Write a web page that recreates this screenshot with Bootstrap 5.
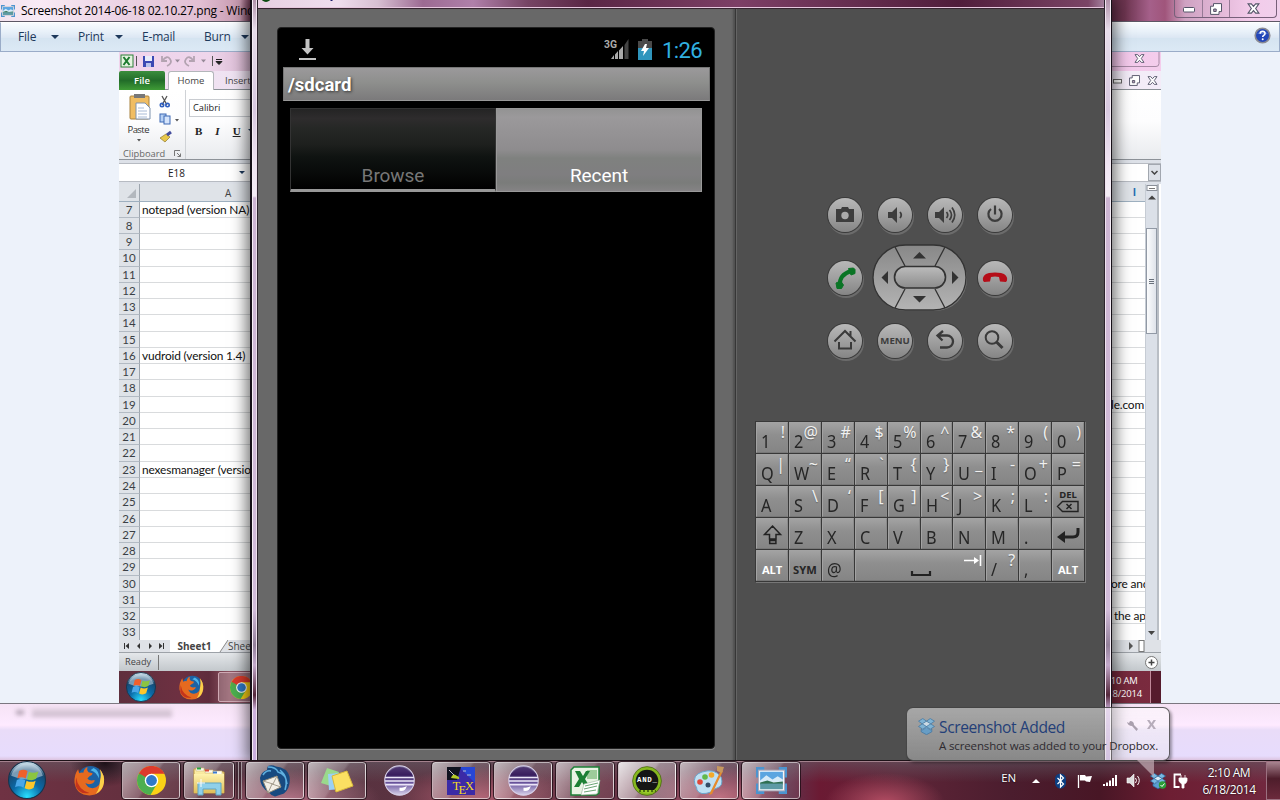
<!DOCTYPE html>
<html lang="en">
<head>
<meta charset="utf-8">
<title>Desktop</title>
<link href="https://cdn.jsdelivr.net/npm/bootstrap@5.3.0/dist/css/bootstrap.min.css" rel="stylesheet">
<style>
body{width:1280px;height:800px;overflow:hidden;font-family:"Open Sans","Noto Sans",sans-serif;line-height:1;font-size:12px;color:#000}
svg{display:block;flex:none}
.desk{width:1280px;height:800px;background:#e8dcfb}
/* photo viewer */
.viewer{left:0;top:0;width:1280px;height:761px}
.v-title{height:22px;background:linear-gradient(90deg,#f3e3ef 0,#f8eaf5 40px,#ecd3e4 120px,#e2bfd3 200px,#c79ab0 240px,#632d47 252px,#632d47 1100px,#6d3550 1125px,#a5608a 1150px,#a0557b 1165px,#cfa2c2 1185px,#f3cbea 1250px,#f0d0ec);border-bottom:1px solid #5d5765;padding-left:1px}
.v-title .cap{font-size:12px;margin-left:6px;letter-spacing:-.22px}
.v-ctl{width:103px;height:18px;border:1px solid #77607a;border-top:0;border-radius:0 0 4px 4px;margin-right:3px}
.v-ctl>*{height:17px;border-right:1px solid #967a96}
.v-ctl>:last-child{border:0}
.v-menu{height:30px;background:linear-gradient(#f8fbfe,#e9f1f9 30%,#dce7f3 52%,#d5e4f1 55%,#dce9f5);border:1px solid #9aacc8;border-top-color:#fff;color:#1e395b;padding-left:17px;letter-spacing:-.2px}
.tri{width:0;height:0;border:4px solid transparent;border-bottom:0;border-top-color:#1e395b}
.v-body{height:651px;background:#edf2fa}
.v-glass{height:58px;background:linear-gradient(#f6e3f5,#fdeaff 20px,#ffeaff 21px,#e9dcf8 26px,#e7dcfd 52px,#dcc3df 56px);border-top:1px solid #7b7780}
.blurbar{width:140px;height:9px;margin:4px 0 0 8px;background:linear-gradient(#e6d5e4,#c9b9ca);filter:blur(2px)}
.blurdot{width:8px;height:5px;margin:6px 0 0 16px;background:#b9a9ba;filter:blur(2px)}
/* spreadsheet */
.xl{width:1042px;height:651px;background:#fff;font-size:10px;color:#444}
.xl-qat{height:19px;background:linear-gradient(90deg,#f1d3ec,#eed6eb 90px,#d9b8d2 131px,#fff 140px,#f3c7ea 990px,#f4cdec)}
.xl-tabs{height:19px;background:linear-gradient(90deg,#f2e0f1,#efe3f2 130px,#f3ecf8);border-bottom:1px solid #8a9096}
.xl-file{width:46px;height:19px;background:linear-gradient(#3b8e3d,#226c29 50%,#3f9b36);color:#fff;border-radius:2px 2px 0 0;font-weight:600;font-size:9.5px}
.xl-home{width:46px;height:19px;background:#fff;border:1px solid #b3b6ba;border-bottom:0;border-radius:3px 3px 0 0;margin-left:3px;font-size:9.5px}
.xl-rib{height:70px;background:linear-gradient(#fff,#fdfdfe 45%,#e9ebee);border-bottom:1px solid #8d9298}
.xl-clip{width:67px;border-right:1px solid #cfd2d6}
.xl-fbar{height:24px;background:#dde1e8;padding-top:3px}
.xl-fbar>div{height:17px;background:#fff;border-top:1px solid #b7bbc2;border-bottom:1px solid #b7bbc2;box-sizing:content-box}
.xl-main{height:456px}
.grid-area{width:1026px}
.xl-hd{height:17.5px;background:#dfe3e8;border-bottom:1px solid #9eb0c0}
.xl-r{height:16.27px;font-family:Lato,"Open Sans",sans-serif;font-size:11.9px;color:#111}
.xl-r .no{width:21px;background:#dfe3e8;border-right:1px solid #9da5ae;border-bottom:1px solid #b3bbc4;color:#3a3f45;text-align:center;font-size:11.5px;line-height:16px}
.xl-r .ce{border-bottom:1px solid #d9dbdd;line-height:16px;padding-left:2px;letter-spacing:-.15px;white-space:pre}
.xl-sb{width:14px;background:#dbe0e8;border-left:1px solid #c6ccd4;border-right:2px solid #b9bec5}
.thumb{width:11px;height:106px;background:linear-gradient(90deg,#fbfcfd,#dfe3ea);border:1px solid #9199a5}
.xl-sheets{height:12px;background:#dfe2e7}
.xl-stat{height:19px;background:linear-gradient(#e4e7ea,#c3c8cc);border-top:1px solid #9da2a8}
.xl-task{height:32px;background:linear-gradient(90deg,#5f2f3d,#6d3041 60px,#5f2c3c 90px,#8c5462 110px,#784457 140px,#6d2638 900px,#7b2b3f)}
/* emulator window */
.emu{left:250px;top:0;width:862px;height:761px;box-shadow:0 0 15px 3px rgba(0,0,0,.6);border-left:2px solid #161018;border-right:1px solid #161018;background:linear-gradient(#b193ab 0,#e7dcea 30px,#d8c8e0 110px,#f0e4f2 165px,#f4edf6 196px,#cdb5d3 198px,#d2bcda 610px,#93809a 645px,#c3a9cb 665px,#55283c 695px,#cdb1dc 710px,#c9aede)}
.emu::after{content:"";position:absolute;inset:0;border:solid #f6edf6;border-width:0 1px;pointer-events:none}
.emu-in{margin:0 6px 0 5px;border-left:1px solid #2d232d;border-right:1px solid #2d232d;width:848px;outline:1px solid #efe2ee}
.emu-t{height:9px;background:linear-gradient(90deg,#e7cfe2,#efdeee 80px,#d7bfd2 120px,#9c6a92 165px,#b080aa 215px,#764464 270px,#5a2645 330px,#7d3f66 480px,#501d3b 700px,#7b4466 830px,#a4809d);border-bottom:1px solid #35242f;box-shadow:inset 0 -1px #e6c7de}
.lp{width:478px;background:#686868;padding:18px 0 0 19px;border-right:1px solid #373737;box-shadow:inset -3px 0 2px -1px #515151}
.rp{width:368px;background:#4f4f4f;box-shadow:inset 1px 0 #656565}
.scr{width:438px;height:722px;background:#000;border-radius:4px;box-shadow:0 1px #8a8a8a;font-family:Roboto,sans-serif;border:1px solid #222}
.pathbar{margin:0 4px 0 5px;height:34px;background:linear-gradient(#9b999b,#8e8f8d 45%,#7b7a7b);color:#fff;font-weight:700;font-size:18.5px;padding:2px 0 0 4px;text-shadow:1px 1px 3px #333;border:1px solid #777;border-bottom-color:#999}
.andtab{width:206px;height:84px;font-size:19px;letter-spacing:-.05px}
.t1{background:linear-gradient(#242424,#2e2c2d 12%,#252725 25%,#1d1f1d 45%,#0f1311 60%,#080a09 80%,#000);color:#777;border:1px solid #333;border-bottom:3px solid #989898;padding-bottom:4px}
.t2{background:linear-gradient(#939393,#9b999b 10%,#8e8c8e 50%,#7f817f 60%,#7f7e80 80%,#7a7c7a 90%,#858385);color:#fff;border:1px solid #999;padding-bottom:6px}
.pad{grid-template-columns:repeat(4,34px);grid-template-rows:repeat(3,34px);column-gap:15.8px;row-gap:29px;display:grid;margin-top:189px}
.kb2{width:34px;height:34px;border-radius:50%;background:linear-gradient(#b8b8b8,#a0a0a0 50%,#858585);box-shadow:0 0 0 1px #3a3a3a,1px 2px 0 1px #6b6b6b;color:#3d3d3d;font-weight:700;font-size:9.6px}
.dpad{grid-column:2/4;grid-row:2;place-self:center}
.keys{display:grid;grid-template-columns:repeat(10,1fr);grid-template-rows:repeat(5,31px);gap:1px;width:330px;padding:1px;background:#383838;margin-top:63px;box-shadow:1px 1px #777;font-family:"Noto Sans","Open Sans",sans-serif}
.ky{background:linear-gradient(#a2a2a2,#8f8f8f 40%,#858585);border:1px solid #a3a3a3;border-right-color:#8b8b8b;border-bottom-color:#777;font-size:17.5px;color:#262626;padding:9px 0 0 4px;line-height:18px}
.ky>b{display:inline-block;font-weight:400;transform:scaleX(.93);transform-origin:0 0}
.ky sup{right:2px;top:0;color:#f0f0f0;font-size:16px;line-height:18px;text-shadow:0 1px 1px #666}
.sp{grid-column:span 4}
.wd{font-size:11.2px;font-weight:700;padding:0;line-height:11px}
/* notification balloon */
.toast-tip{left:906px;top:707px;width:264px;height:54px;border:1px solid rgba(45,45,45,.75);border-radius:7px;background:linear-gradient(rgba(255,255,255,.5),rgba(230,230,230,.38));box-shadow:2px 2px 3px rgba(0,0,0,.35);padding:10px 9px 0 11px}
.toast-tip h6{font-size:15.6px;color:#243f78;margin:0;font-weight:400;line-height:18px;letter-spacing:-.43px}
.toast-tip p{font-size:11.5px;color:#2e2b30;margin:4px 0 0 21px;white-space:nowrap;letter-spacing:-.14px}
.tail{left:1136px;top:760px}
/* taskbar */
.tbar{left:0;top:760px;width:1280px;height:40px;background:radial-gradient(60px 30px at 885px 42px,#b34d63,transparent),radial-gradient(70px 30px at 720px 36px,#b86375,transparent),radial-gradient(90px 30px at 290px 38px,#a8667a,transparent),radial-gradient(90px 30px at 480px 36px,#ab5a6c,transparent),radial-gradient(35px 24px at 105px 2px,#1d1018,transparent),linear-gradient(rgba(100,95,105,.55),rgba(60,45,55,0) 55%),linear-gradient(90deg,#6f3243,#65303f 120px,#57303d 250px,#5a3341 400px,#6a3546 600px,#63314a 790px,#6b1a33 820px,#5f2538 900px,#4b1d2e 1010px,#481625 1100px,#6d1e33 1170px,#722940 1280px);border-top:1px solid #1d1218;box-shadow:inset 0 1px #a3818d}
.tb{width:58px;height:37px;margin:1px 2px 0;border:1px solid rgba(255,255,255,.55);border-radius:3px;outline:1px solid rgba(25,10,18,.75);background:linear-gradient(125deg,rgba(255,255,255,.6),rgba(255,255,255,.26) 48%,rgba(255,255,255,.12) 52%,rgba(255,255,255,.06))}
.tb.plain{border-color:transparent;outline:0;background:none}
.tb.hot{background:linear-gradient(125deg,rgba(255,255,255,.85),rgba(255,255,255,.5) 48%,rgba(255,255,255,.36) 52%,rgba(255,255,255,.26))}
.stk{width:3px;height:37px;margin-top:1px;border-right:1px solid rgba(255,255,255,.5);background:rgba(30,10,20,.45)}
.tray{color:#fff;letter-spacing:-.2px;text-shadow:0 0 2px #000}
.peek{width:14px;height:39px;border:1px solid #9b7080;border-right:0;background:linear-gradient(#a88490,#4e1d2b 45%,#6b2a3c)}
</style>
</head>
<body>
<svg width="0" height="0" class="position-absolute">
<defs>
<radialGradient id="og" cx=".5" cy=".95" r=".9"><stop offset="0" stop-color="#29e0ff"/><stop offset=".45" stop-color="#0a6aa8"/><stop offset=".8" stop-color="#174a73"/><stop offset="1" stop-color="#b9d2e0"/></radialGradient>
<linearGradient id="eg" x1="0" y1="0" x2="0" y2="1"><stop offset="0" stop-color="#8f86ad"/><stop offset=".3" stop-color="#39205e"/><stop offset=".6" stop-color="#6d58a0"/><stop offset="1" stop-color="#d9d3ea"/></linearGradient>
<linearGradient id="mg" x1="0" y1="0" x2="0" y2="1"><stop offset="0" stop-color="#888"/><stop offset="1" stop-color="#b4b4b4"/></linearGradient>
<linearGradient id="cg" x1="0" y1="0" x2="0" y2="1"><stop offset="0" stop-color="#bcbcbc"/><stop offset="1" stop-color="#8c8c8c"/></linearGradient>
<linearGradient id="fg" x1="0" y1="0" x2="0" y2="1"><stop offset="0" stop-color="#fff3ae"/><stop offset="1" stop-color="#dfbd58"/></linearGradient>
</defs>
<symbol id="orb" viewBox="0 0 36 36"><circle cx="18" cy="18" r="17.500" fill="url(#og)" stroke="#16344c"/><path d="M3 14a15.500 15.500 0 0 1 30 0q-15 7-30 0" fill="#dceaf2" opacity=".5"/>
<path d="M10.500 9.500q4-2.500 8 0l-1.700 7q-4-2-8 0z" fill="#f0602b"/><path d="M19.800 10.200q4 2.200 9-.3l-2.200 7q-4 2.400-8.600.3z" fill="#8bc540"/><path d="M8.400 18q4-2.200 8 .2l-1.700 7.200q-4-2.500-8-.5z" fill="#4aa7e8"/><path d="M17.600 18.600q4.200 2.300 8.600 0l-2 7q-4 2.500-8.500.2z" fill="#fcc72c"/></symbol>
<symbol id="ff" viewBox="0 0 30 30"><circle cx="16" cy="14" r="13" fill="#1c62a4"/><path d="M19 3q6 3 5 10-2-6-8-8z" fill="#4db4e8"/><path d="M25 4q5 6 4 13-2 12-14 12.500Q2 29 .5 17 0 9 4 4l1 4q2-1 4-.5Q10 3 13 2q-1 3 1 5l4 1q0 2-3 3l-2 2q1 2 4 2l3-.5q0 3-4 4-3 .5-5-1 2 5 7 5 8-1 7.500-9Q27 9 25 4z" fill="#e66a1f"/><path d="M25 4q5 6 4 13-1 8-8 11 4-5 4-11.500Q27 9 25 4z" fill="#fbd04a"/><path d="M2 12q2 12 13 15-10 2-13.500-7z" fill="#c4341c"/></symbol>
<symbol id="ch" viewBox="0 0 28 28"><circle cx="14" cy="14" r="14" fill="#fbd116"/><path d="M1.900 7A14 14 0 0 0 13 28l6.500-11L14 14z" fill="#4caf50"/><path d="M1.900 7A14 14 0 0 1 26.500 7.500H14L8 17z" fill="#dc3a2c"/><path d="M1.900 7L8.500 18.500 14 14z" fill="#4caf50"/><circle cx="14" cy="14" r="6.500" fill="#fff"/><circle cx="14" cy="14" r="5.200" fill="#2f79c8"/></symbol>
<symbol id="ec" viewBox="0 0 30 30"><circle cx="15" cy="15" r="14.300" fill="url(#eg)" stroke="#d8d0e8"/><path d="M3 10Q8 2 15 2t12 8z" fill="#3b1e60" opacity=".7"/><path d="M1 12h28M1 15.500h28M1.500 19h27" stroke="#ece6f8" stroke-width="1.500"/><path d="M15 22q5 0 7-2-1 6-7 5" fill="#fff"/></symbol>
<symbol id="db" viewBox="0 0 16 16"><path d="M4 5.500L8 3l4 2.500v7L8 15l-4-2.500z" fill="#d6eaf7"/><path d="M4.500.5L8 3 4 5.500.5 3zM11.500.5L15.500 3 12 5.500 8 3zM.5 8L4 5.500 8 8l-3.500 2.500zM15.500 8L12 5.500 8 8l3.500 2.500z" fill="#78b9e2" stroke="#2c6ca0" stroke-width=".7"/><path d="M3 10.500l1.500.7L8 8.700l3.500 2.500 1.500-.7v2.500L8 15.700 3 13z" fill="#5b9ed0" stroke="#2c6ca0" stroke-width=".7"/></symbol>
<symbol id="pic" viewBox="0 0 30 26"><path d="M0 0h8v4H3v6H0zM30 0h-8v4h5v6h3zM0 26h8v-4H3v-6H0zM30 26h-8v-4h5v-6h3z" fill="#4c94cf"/><rect x="2.500" y="3" width="25" height="20" fill="#fff" stroke="#aab"/><rect x="4" y="4.500" width="22" height="9" fill="#5ba5e0"/><path d="M4 13l6-5 6 4 5-3 5 3v3H4z" fill="#d7ebf8"/><path d="M4 15l7-2 6 2 9-1v3H4z" fill="#2f6f50"/><path d="M4 16h22v5.500H4z" fill="#5d9aa5"/></symbol>
<symbol id="cx" viewBox="0 0 12 10"><path d="M1 .7h3L6 3 8 .7h3L8 5l3 4.300H8L6 7 4 9.300H1L4 5z" fill="#fff" stroke="#545468" stroke-width="1"/></symbol>
<symbol id="rst" viewBox="0 0 12 12"><path d="M3.500.6h8v8H9v2.800H.6V3.200h2.900z" fill="#fff" stroke="#545468"/><path d="M3.700 6h2.500v2.500H3.700z" fill="#b99bb8" stroke="#545468"/></symbol>
</svg>

<div class="desk position-relative overflow-hidden">

<section class="viewer position-absolute">
 <div class="v-title d-flex align-items-center">
  <svg width="14" height="14"><use href="#pic"/></svg><span class="cap text-nowrap">Screenshot 2014-06-18 02.10.27.png - Windows Photo Viewer</span>
  <div class="v-ctl d-flex ms-auto align-self-start">
   <span class="d-flex align-items-center justify-content-center" style="width:28px"><svg width="12" height="6" style="margin-top:3px"><rect x=".5" y=".5" width="11" height="4.500" rx="1" fill="#fff" stroke="#545468"/></svg></span>
   <span class="d-flex align-items-center justify-content-center" style="width:27px"><svg width="12" height="12"><use href="#rst"/></svg></span>
   <span class="d-flex align-items-center justify-content-center flex-fill"><svg width="13" height="11"><use href="#cx"/></svg></span>
  </div>
 </div>
 <div class="v-menu d-flex align-items-center">
  <span style="width:33px">File</span><i class="tri"></i>
  <span style="width:37px;margin-left:19px">Print</span><i class="tri"></i>
  <span style="width:62px;margin-left:19px">E-mail</span><span style="width:37px">Burn</span><i class="tri"></i>
  <svg class="ms-auto me-2" width="17" height="17" viewBox="0 0 17 17" style="margin-top:-3px"><circle cx="8.500" cy="8.500" r="7.300" fill="#2447b8" stroke="#8a8a92" stroke-width="1.600"/><path d="M3 7q5.500-6 11 0" fill="#7f9fe8" opacity=".5"/><path d="M6.200 6.800q0-2.500 2.400-2.500t2.400 2.100q0 1.200-1.300 2-1 .6-1 1.700" fill="none" stroke="#fff" stroke-width="1.600"/><circle cx="8.700" cy="12.300" r="1" fill="#fff"/></svg>
 </div>
 <div class="v-body">
  <div class="xl ms-auto overflow-hidden" style="margin-right:119px">
   <div class="xl-qat d-flex">
    <svg width="131" height="19" viewBox="0 0 131 19"><rect x="2" y="3" width="12" height="12" fill="#e5f3e0" stroke="#2d8038"/><path d="M4.500 5l6 8m0-8l-6 8" stroke="#1c7a2e" stroke-width="2"/><path d="M17.500 4v10M93.500 4v10" stroke="#555"/><path d="M24 4h11v11H24z" fill="#3b49b3"/><path d="M26 4h7v5h-7z" fill="#e8ecfa"/><path d="M27 11h5v4h-5z" fill="#b8c2ea"/><path d="M43 4v5h5M44 8q4-5 7-1t-3 7M75 4v5h-5M74 8q-4-5-7-1t3 7" fill="none" stroke="#b3a3b1" stroke-width="1.800"/><path d="M56 7.500h5l-2.500 3zM82 7.500h5l-2.500 3z" fill="#978a98"/><path d="M97 7.500h6M97 9.500h6l-3 3z" stroke="#222" fill="#222"/></svg>
    <svg class="ms-auto" width="50" height="19" viewBox="0 0 50 19"><path d="M0 14.500h45q3 0 3-3V0" fill="none" stroke="#a78aa5"/><svg x="23" y="2" width="11" height="9"><use href="#cx"/></svg></svg>
   </div>
   <div class="xl-tabs d-flex">
    <div class="xl-file d-flex align-items-center justify-content-center">File</div><div class="xl-home d-flex align-items-center justify-content-center">Home</div><span style="font-size:9.5px;margin:5px 0 0 11px">Insert</span>
    <svg class="ms-auto" width="50" height="19" viewBox="0 0 50 19"><rect x="2.500" y="8.500" width="8" height="3.500" fill="#fff" stroke="#666"/><svg x="18" y="4" width="11" height="11"><use href="#rst"/></svg><svg x="36" y="5" width="11" height="9"><use href="#cx"/></svg></svg>
   </div>
   <div class="xl-rib d-flex">
    <div class="xl-clip">
     <svg width="66" height="56" viewBox="0 0 66 56"><rect x="11" y="6" width="19" height="23" rx="1" fill="#f0bd62" stroke="#a8823f"/><rect x="15" y="4" width="11" height="4" fill="#777"/><path d="M17 13h9l5 5v11H17z" fill="#fff" stroke="#7f93ae"/><path d="M19 18h6M19 21h9M19 24h9M19 27h9" stroke="#a8bbd6"/><path d="M43 6l5 9M48 6l-5 9" stroke="#555" stroke-width="1.300"/><circle cx="43" cy="15" r="1.700" fill="none" stroke="#2f5fc0" stroke-width="1.600"/><circle cx="48.500" cy="15" r="1.700" fill="none" stroke="#2f5fc0" stroke-width="1.600"/><rect x="41" y="24" width="6" height="8" fill="#b6d0f4" stroke="#3c68b4"/><rect x="45" y="26" width="6" height="8" fill="#d5e4fb" stroke="#3c68b4"/><path d="M56 29h4l-2 2.500zM18 49h4l-2 2.500z" fill="#555"/><path d="M41 48l6-4 4 3-5 5z" fill="#e8c84c" stroke="#8f7930" stroke-width=".7"/><path d="M48 45l4-3" stroke="#444d9c" stroke-width="3"/><text x="8.500" y="42.500" font-size="9.500" fill="#333" textLength="22">Paste</text></svg>
     <div class="d-flex align-items-center justify-content-between px-1" style="margin-top:3px;color:#666;font-size:9.300px">Clipboard<svg width="7" height="7" viewBox="0 0 7 7"><path d="M.5 6V.5H6M3 3l3.500 3.500V3.500M6.500 6.500H3.500" fill="none" stroke="#777"/></svg></div>
    </div>
    <div style="padding:9px 0 0 3px">
     <div class="d-flex align-items-center bg-white" style="width:80px;height:18px;border:1px solid #c9ccd1;padding-left:3px;font-size:9.200px;color:#222">Calibri</div>
     <div class="d-flex" style="font:bold 11px 'Liberation Serif',serif;color:#222;margin:8px 0 0 6px;gap:13px"><b>B</b><i>I</i><u>U</u><i class="tri" style="border-width:3px;border-bottom:0;margin:4px 0 0 -6px"></i></div>
    </div>
   </div>
   <div class="xl-fbar"><div class="d-flex align-items-center"><span class="text-center" style="width:115px;font-size:10px;color:#222">E18</span><i class="tri" style="border-width:3px;border-bottom:0;margin-left:5px"></i><span class="ms-auto d-flex align-items-center justify-content-center" style="width:13px;height:17px;background:#dde1e8;border:1px solid #a2a7af"><svg width="7" height="5"><path d="M.5 1l3 3 3-3" fill="none" stroke="#444" stroke-width="1.500"/></svg></span></div></div>
   <div class="xl-main d-flex">
    <div class="grid-area overflow-hidden">
     <div class="xl-hd d-flex align-items-center"><svg width="21" height="17"><path d="M17 5v9H8z" fill="#b3b8be"/><path d="M20.500 0v17" stroke="#9da5ae"/></svg><span style="margin:2px 0 0 85px;color:#444">A</span><span class="ms-auto fw-bold" style="margin-right:9px;color:#1d6ab0">I</span></div>
     <div id="rows"></div>
    </div>
    <div class="xl-sb d-flex flex-column align-items-center">
     <svg width="12" height="44" viewBox="0 0 12 44"><rect x="1" y="1.500" width="10" height="5" fill="#fff" stroke="#8a8f98"/><path d="M3 4.500h6" stroke="#777"/><path d="M2 15.500h8l-4-4z" fill="#444"/></svg>
     <div class="thumb d-flex align-items-center justify-content-center"><svg width="5" height="7"><path d="M0 1.500h5M0 3.500h5M0 5.500h5" stroke="#69717c"/></svg></div>
     <svg class="mt-auto mb-1" width="10" height="6"><path d="M1 1h7L4.500 5z" fill="#444"/></svg>
    </div>
   </div>
   <div class="xl-sheets d-flex align-items-center">
    <svg width="51" height="12" viewBox="0 0 51 12"><path d="M5.500 3v6M44.500 3v6" stroke="#333"/><path d="M10 3v6L6.500 6zM21 3v6l-3-3zM30 3v6l3-3zM40 3v6l3.500-3z" fill="#333"/></svg>
    <b class="bg-white text-center" style="width:49px;height:12px;font-size:10px;line-height:12px">Sheet1</b><svg width="9" height="12"><path d="M0 0h9L1 12H0z" fill="#fff"/><path d="M9 0L1 12" stroke="#888"/></svg><span>Sheet2</span>
    <svg class="ms-auto me-3" width="20" height="12"><path d="M4 2v8l4-4z" fill="#555"/><rect x="14" y=".5" width="5" height="11" fill="#fff" stroke="#777"/></svg>
   </div>
   <div class="xl-stat d-flex align-items-center" style="padding-left:6px;font-size:9.200px"><span style="width:33px">Ready</span><i style="width:1px;height:15px;background:#777"></i><svg class="ms-auto" width="13" height="13" style="margin-right:3px"><circle cx="6.500" cy="6.500" r="6" fill="#fff" stroke="#777"/><path d="M3.500 6.500h6M6.500 3.500v6" stroke="#444" stroke-width="1.500"/></svg></div>
   <div class="xl-task d-flex align-items-center"><svg width="30" height="30" style="margin-left:7px"><use href="#orb"/></svg><svg width="25" height="25" style="margin-left:23px"><use href="#ff"/></svg><span class="d-flex align-items-center" style="margin-left:14px;width:50px;height:30px;border:1px solid #cfa9b4;background:#ffffff33;padding-left:11px;border-radius:2px"><svg width="23" height="23"><use href="#ch"/></svg></span>
    <div class="ms-auto text-white text-center" style="font-size:9.500px;line-height:13.500px;margin-right:8px;letter-spacing:-.2px">2:10 AM<br>6/18/2014</div><i style="width:11px;height:32px;border-left:1px solid #c08898;background:#561b2c"></i></div>
  </div>
 </div>
 <div class="v-glass d-flex"><div class="blurdot"></div><div class="blurbar"></div></div>
</section>

<section class="emu position-absolute">
 <div class="emu-in">
  <div class="emu-t overflow-hidden"><svg width="90" height="7" viewBox="0 0 90 7"><circle cx="8" cy="-3" r="5" fill="#0c4a10"/><path d="M73.500 0v1" stroke="#1a1a6a" stroke-width="2"/></svg></div>
  <div class="d-flex" style="height:752px">
   <div class="lp">
    <div class="scr">
     <div class="d-flex align-items-center" style="height:39px;padding:4px 12px 0 21px">
      <svg width="17" height="22" viewBox="0 0 17 22"><path d="M6.500 0h4v9h4l-6 6.500-6-6.500h4z" fill="#c4c4c4"/><path d="M0 19h17v2H0z" fill="#c4c4c4"/></svg>
      <svg class="ms-auto" width="26" height="23" viewBox="0 0 26 23"><path d="M24.500 1v20h-4V7z" fill="#444"/><path d="M19 8v13h-4v-8.500zM14 13v8h-3v-4.500zM10 17v4H7z" fill="#aaa"/><text x="0" y="9.500" font-size="10.500" font-weight="700" font-family="Roboto" fill="#aaa" textLength="13" lengthAdjust="spacingAndGlyphs">3G</text></svg>
      <svg style="margin-left:8px" width="14" height="21" viewBox="0 0 14 21"><path d="M4 0h6v2h4v7H0V2h4z" fill="#4a4a4a"/><path d="M0 9h14v12H0z" fill="#2f95bd"/><path d="M7 5l-4 7h3l-1 5 6-8H8l1-4z" fill="#fff"/></svg>
      <span style="color:#31b0e0;font-size:22px;margin:3px 0 0 10px;letter-spacing:-.6px">1:26</span>
     </div>
     <div class="pathbar d-flex align-items-center">/sdcard</div>
     <div class="d-flex" style="margin:7px 0 0 12px">
      <div class="andtab t1 d-flex align-items-end justify-content-center">Browse</div>
      <div class="andtab t2 d-flex align-items-end justify-content-center">Recent</div>
     </div>
    </div>
   </div>
   <div class="rp d-flex flex-column align-items-center">
    <div class="pad">
     <span class="kb2"><svg width="34" height="34" viewBox="0 0 34 34"><path d="M8 11h5l1-2h6l1 2h5v13H8z" fill="#3d3d3d"/><circle cx="17" cy="17.500" r="3.700" fill="#aaa"/></svg></span>
     <span class="kb2"><svg width="34" height="34" viewBox="0 0 34 34"><path d="M10 14h4l5-5v16l-5-5h-4z" fill="#3d3d3d"/><path d="M22 14q2.500 3 0 6" stroke="#3d3d3d" stroke-width="1.800" fill="none"/></svg></span>
     <span class="kb2"><svg width="34" height="34" viewBox="0 0 34 34"><path d="M7 14h4l5-5v16l-5-5H7z" fill="#3d3d3d"/><path d="M18.500 14q2.500 3 0 6M21.500 12q4 5 0 10M24 9.500q5.500 7.500 0 15" stroke="#3d3d3d" stroke-width="1.700" fill="none"/></svg></span>
     <span class="kb2"><svg width="34" height="34" viewBox="0 0 34 34"><path d="M13 11a6.600 6.600 0 1 0 8 0M17 7.500v9" stroke="#3d3d3d" stroke-width="2.200" fill="none"/></svg></span>
     <span class="kb2"><svg width="34" height="34" viewBox="0 0 34 34"><path d="M12 24Q11 14 23 10" stroke="#0a7425" stroke-width="4" fill="none"/><path d="M8 22l4.500-2 3 4-2 3.500H9zM20.500 7.500l5-.5 1.500 1.500v4l-4 1.500z" fill="#0a7425" stroke="#0a7425" stroke-linejoin="round"/></svg></span>
     <svg class="dpad" width="96" height="68" viewBox="0 0 96 68"><rect x="2" y="3" width="93" height="64" rx="32" fill="#777"/><rect x="1" y="1" width="93" height="65" rx="32.500" fill="url(#mg)" stroke="#333" stroke-width="1.300"/><path d="M23 3l10 19M73 3L63 22M23 64l10-19M73 64L63 45" stroke="#333" stroke-width="1.300"/><rect x="22.500" y="22.500" width="51" height="21.500" rx="10.700" fill="url(#cg)" stroke="#333" stroke-width="1.600"/><path d="M41 14.500h13L47.500 8zM41 52h13l-6.500 6.500zM16 27v13l-6.500-6.500zM80 27v13l6.500-6.500z" fill="#333"/></svg>
     <span class="kb2" style="grid-column:4"><svg width="34" height="34" viewBox="0 0 34 34"><path d="M5 19.500q-1-6 6-7.500 6-1 12 0 7 1.500 6 7.500l-1 1.500-6-.5-1-4.500q-4-1-8 0l-1 4.500-6 .5z" fill="#b50d18"/></svg></span>
     <span class="kb2"><svg width="34" height="34" viewBox="0 0 34 34"><path d="M6.500 17.500L17 7l10.500 10.500M22.500 12.500V7M11 18v6.500h12V18" stroke="#3a3a3a" stroke-width="2" fill="none"/></svg></span>
     <span class="kb2 d-flex align-items-center justify-content-center">MENU</span>
     <span class="kb2"><svg width="34" height="34" viewBox="0 0 34 34"><path d="M15 7L9.500 11.500l5 5M9.500 11.500H19a6 6 0 0 1 0 12h-7" stroke="#3a3a3a" stroke-width="2.300" fill="none"/></svg></span>
     <span class="kb2"><svg width="34" height="34" viewBox="0 0 34 34"><circle cx="14" cy="13.500" r="6.300" stroke="#3a3a3a" stroke-width="2" fill="none"/><path d="M18.500 18l6 6" stroke="#3a3a3a" stroke-width="3"/></svg></span>
    </div>
    <div class="keys" id="keys"></div>
   </div>
  </div>
 </div>
</section>

<section class="tbar position-absolute d-flex align-items-start">
 <svg width="38" height="38" style="margin:0 0 0 8px"><use href="#orb"/></svg>
 <span class="tb plain d-flex align-items-center justify-content-center" style="margin-left:14px"><svg width="31" height="31"><use href="#ff"/></svg></span>
 <span class="tb d-flex align-items-center justify-content-center"><svg width="29" height="29"><use href="#ch"/></svg></span>
 <span class="tb d-flex align-items-center justify-content-center" style="width:50px"><svg width="32" height="30" viewBox="0 0 32 30"><path d="M1 3h10l2 3h18v21H1z" fill="url(#fg)" stroke="#c39d42"/><path d="M3 2h8v3H3zM12 4h8v3h-8zM20 5h9v4h-9z" fill="#fffdf0" stroke="#cdbb7c" stroke-width=".6"/><path d="M4 1.500h4v2H4z" fill="#27a243"/><path d="M12 3.500h4v2h-4z" fill="#d94a3a"/><path d="M20 5.500h4v2h-4z" fill="#3a7bd0"/><path d="M1 8h30v19H1z" fill="url(#fg)"/><path d="M5 29V17h23v12h-5v-6H10v6z" fill="#8fd0ea" stroke="#5ea5c4"/><path d="M8 13v8M4 17h8" stroke="#fff"/></svg></span>
 <i class="stk"></i><i class="stk" style="margin-right:2px"></i>
 <span class="tb d-flex align-items-center justify-content-center"><svg width="32" height="32" viewBox="0 0 32 32"><path d="M9 1q4-1.500 8 .5 11 1 13.500 10 1.500 11-5.500 17l-9 3q-4-1-6-4Q1 22 1 13q1-6 7-8 0-2 1-4z" fill="#174a80"/><path d="M9 2q8 0 10 5 8 2 9 12M21 5q9 7 5 20M4 10q3-5 8-4" stroke="#5fb0e0" stroke-width="1.500" fill="none"/><path d="M4 16l14-5 4 11-13 6z" fill="#f3efe6" stroke="#8c8676"/><path d="M4 16l10 3 4-8M9 28l4-9 9 3" fill="none" stroke="#a39c8c"/></svg></span>
 <span class="tb d-flex align-items-center justify-content-center"><svg width="34" height="28" viewBox="0 0 34 28"><path d="M7 1l12 4-5 15L1 16z" fill="#9ad98c"/><path d="M8 7l12-1 2 16-13 1z" fill="#9bd0f5"/><path d="M12 9l15-5 6 15-17 6z" fill="#fbe062" stroke="#d9b93c"/></svg></span>
 <span class="tb plain d-flex align-items-center justify-content-center"><svg width="31" height="31"><use href="#ec"/></svg></span>
 <span class="tb d-flex align-items-center justify-content-center"><svg width="28" height="28" viewBox="0 0 28 28"><rect width="28" height="28" fill="#3b2aa6"/><path d="M12 0h16v16z" fill="#2746d6"/><path d="M0 0h14L10 13H0z" fill="#10121f"/><path d="M4 11q2-6 6-2 3 1 2 3z" fill="#b5c928"/><path d="M2 3l5 5M16 4h3M20 8h4" stroke="#bbc"/><g font-family="Liberation Serif" font-size="12.500" fill="#f4dd1c"><text x="5.500" y="23">T</text><text x="11.500" y="26.500">E</text><text x="18" y="23">X</text></g></svg></span>
 <span class="tb d-flex align-items-center justify-content-center"><svg width="31" height="31"><use href="#ec"/></svg></span>
 <span class="tb d-flex align-items-center justify-content-center"><svg width="31" height="30" viewBox="0 0 31 30"><path d="M4 1h25v26l-3 2H1V4z" fill="#e9f4e4" stroke="#1d8137" stroke-width="1.500"/><path d="M17 4h10v9H17z" fill="#9dcc9a"/><path d="M5 5h5l3 5 3-5h4l-5 8 5 8h-5l-3-5-3 5H4l5-8z" fill="#1c8034"/><path d="M14 18l16-4-3 14-16 1z" fill="#fff" stroke="#9ab59a" stroke-width=".6"/><path d="M15 20l13-3M14 23l13-3M14 26l12-2" stroke="#6ba574"/></svg></span>
 <span class="tb hot d-flex align-items-center justify-content-center"><svg width="30" height="30" viewBox="0 0 30 30"><circle cx="15" cy="15" r="12.800" fill="#151515" stroke="#86b81f" stroke-width="3"/><circle cx="15" cy="15" r="14.400" fill="none" stroke="#47690d" stroke-width=".8"/><text x="5" y="16" font-family="Liberation Mono" font-weight="700" font-size="7.500" fill="#fff" textLength="20">AND_</text><path d="M7 24q8 7 16 0z" fill="#9acb2a"/><path d="M7 25h17" stroke="#34520a" stroke-width="1.500" stroke-dasharray="2 2"/></svg></span>
 <span class="tb d-flex align-items-center justify-content-center"><svg width="32" height="31" viewBox="0 0 32 31"><path d="M2 20Q-1 10 9 7q13-4 19 5 3 9-4 11-4 1-6 4-11 4-14-2 0-3-2-5z" fill="#bfe0f3" stroke="#6ba6cc"/><circle cx="7" cy="17" r="2.800" fill="#e0473a"/><circle cx="12" cy="12" r="2.800" fill="#62b94a"/><circle cx="18.500" cy="10" r="2.800" fill="#f3a92a"/><circle cx="15" cy="20" r="2.500" fill="#334d68"/><path d="M28 5L16 30l3-1L30 6z" fill="#e58a2c"/><path d="M24 1l7 1-2 6-5-2z" fill="#c6985f"/></svg></span>
 <span class="tb d-flex align-items-center justify-content-center"><svg width="31" height="27"><use href="#pic"/></svg></span>
 <div class="tray ms-auto d-flex align-items-start h-100">
  <span style="font-size:11.500px;margin:11px 16px 0 0">EN</span>
  <svg width="156" height="20" viewBox="0 0 156 20" style="margin-top:10px"><path d="M0 12h8l-4-4z" fill="#fff"/><rect x="23" y="2.500" width="11" height="15" rx="5.500" fill="#0b3e82"/><path d="M25.500 7l6 6-3 3V4l3 3-6 6" stroke="#fff" stroke-width="1.200" fill="none"/><path d="M46.500 4v13" stroke="#fff" stroke-width="1.300"/><path d="M48 4h5l1 1.500 6-.5-2 6-4-.5-1-1h-5z" fill="#fff"/><path d="M71 13h2v2h-2zM74 11.500h2V15h-2zM77 9.500h2V15h-2zM80 7h2v8h-2zM83 4h2v11h-2z" fill="#fff"/><path d="M95 7h3l4-4v13l-4-4h-3z" fill="#ddd" stroke="#fff" stroke-width=".6"/><path d="M103.500 7q2 2.500 0 5M105.500 5q3.500 4.500 0 9" stroke="#fff" fill="none"/><svg x="118" y="2" width="16" height="16"><use href="#db"/></svg><circle cx="130.500" cy="14" r="3.700" fill="#2b9d38"/><path d="M128.500 14l1.500 1.500 2.500-3" stroke="#fff" fill="none"/><path d="M149 3.500h-6.500v12.500h5" fill="none" stroke="#fff" stroke-width="1.800"/><path d="M147 7h8v3q-1 3-3 3v4h-2v-4q-2-1-3-3zM149 4v3M153 4v3" fill="#fff" stroke="#fff" stroke-width=".8"/></svg>
  <div class="text-center" style="width:68px;line-height:17px;margin:3px 3px 0 7px;font-size:12px;letter-spacing:-.4px">2:10 AM<br>6/18/2014</div>
  <i class="peek"></i>
 </div>
</section>

<aside class="toast-tip position-absolute">
 <div class="d-flex"><svg width="17" height="17" style="margin-right:4px;opacity:.8"><use href="#db"/></svg><h6 style="letter-spacing:-.42px">Screenshot Added</h6>
  <svg class="ms-auto" width="34" height="16" viewBox="0 0 34 16" style="margin-right:1px"><path d="M2 4l2 1 1-2q4 0 4 4l4 4-1.500 2L7 8Q3 8 2 4z" fill="#aaa0ae"/><path d="M22 2h2.500L26.500 5l2-3H31l-3 4.500 3 4.500h-2.500l-2-3-2 3H22l3-4.500z" fill="#b7adbb"/></svg></div>
 <p>A screenshot was added to your Dropbox.</p>
</aside>
<svg class="tail position-absolute" width="20" height="18" viewBox="0 0 20 18"><path d="M1 0h17v17z" fill="#c3aeb6" opacity=".7"/></svg>
</div>

<script>
const left={7:'notepad (version NA)',16:'vudroid (version 1.4)',23:'nexesmanager (version NA)'};
const right={19:'le.com',30:'ore and',32:' the ap'};
let h='';
for(let i=7;i<34;i++)h+=`<div class="xl-r d-flex"><div class="no">${i}</div><div class="ce flex-fill">${left[i]||''}</div><div class="ce p-0 overflow-hidden" style="width:34px">${right[i]||''}</div></div>`;
document.getElementById('rows').innerHTML=h;
const k=['1!','2@','3#','4$','5%','6^','7&','8*','9(','0)','Q|','W~','E“','R`','T{','Y}','U_','I-','O+','P=','A','S\\','D‘','F[','G]','H<','J>','K;','L:',
'DEL','SHIFT','Z','X','C','V','B','N','M','.','RET','ALT','SYM','@','SPACE','/?',',','ALT'];
const e=s=>s.replace('&','&amp;').replace('<','&lt;');
document.getElementById('keys').innerHTML=k.map(s=>{
 const c='ky position-relative';
 if(s==='ALT')return `<span class="${c} wd text-white text-center" style="padding-top:13px">ALT</span>`;
 if(s==='SYM')return `<span class="${c} wd text-center" style="padding-top:13px">SYM</span>`;
 if(s==='DEL')return `<span class="${c} wd text-center" style="font-size:9.500px;padding-top:2px">DEL<svg width="30" height="14" viewBox="0 0 30 14"><path d="M4.500 6.500l5-5H25v10H9.500z" fill="none" stroke="#222" stroke-width="1.400"/><path d="M13.500 4l5 5m0-5l-5 5" stroke="#222" stroke-width="1.500"/></svg></span>`;
 if(s==='SHIFT')return `<span class="${c} p-0"><svg width="30" height="29" viewBox="0 0 30 29"><path d="M15.500 7l8 8.500h-4.500v4.500h-6.500v-4.500H7.500zM12.700 21.500h6.200v3h-6.200z" fill="none" stroke="#222" stroke-width="1.500"/></svg></span>`;
 if(s==='RET')return `<span class="${c} p-0"><svg width="30" height="29" viewBox="0 0 30 29"><path d="M25 9v4q0 5-5 5H9" fill="none" stroke="#222" stroke-width="3"/><path d="M4 18l8-6v12z" fill="#222"/></svg></span>`;
 if(s==='SPACE')return `<span class="${c} p-0 sp"><svg width="130" height="29" viewBox="0 0 130 29"><path d="M56 20v4h18v-4" fill="none" stroke="#222" stroke-width="2.200"/><path d="M108 9.500h13M124.500 4v11" stroke="#fff" stroke-width="1.600"/><path d="M118 6l5 3.500-5 3.500z" fill="#fff"/></svg></span>`;
 return `<span class="${c}"><b>${e(s[0])}</b>${s[1]?`<sup class="position-absolute">${e(s[1])}</sup>`:''}</span>`;
}).join('');
</script>
<script src="https://cdn.jsdelivr.net/npm/bootstrap@5.3.0/dist/js/bootstrap.bundle.min.js"></script>
</body>
</html>
